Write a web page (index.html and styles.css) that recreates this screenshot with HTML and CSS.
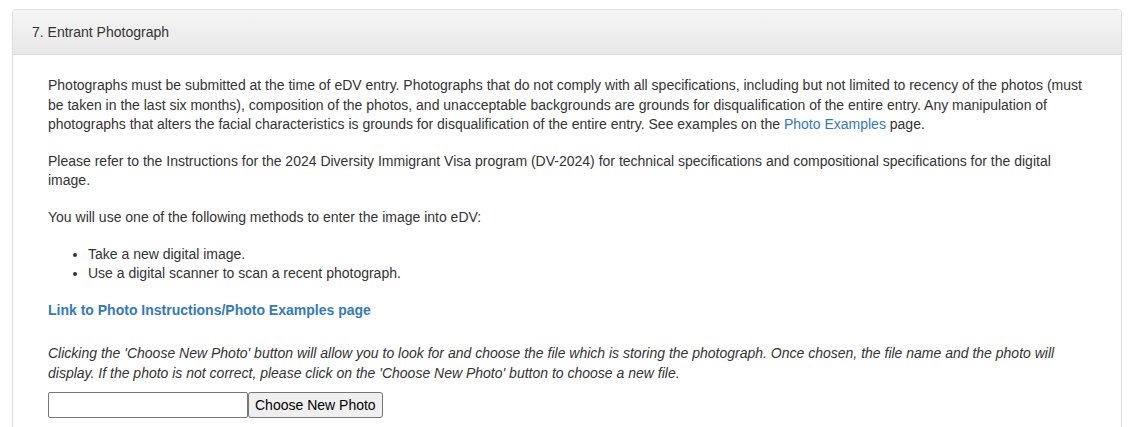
FILE: index.html
```html
<!DOCTYPE html>
<html lang="en">
<head>
<meta charset="utf-8">
<title>Entrant Photograph</title>
<link rel="stylesheet" href="styles.css">
</head>
<body>
<div class="page">
  <section class="panel">
    <div class="panel-heading">7. Entrant Photograph</div>
    <div class="panel-body">
      <p>Photographs must be submitted at the time of eDV entry. Photographs that do not comply with all specifications, including but not limited to recency of the photos (must be taken in the last six months), composition of the photos, and unacceptable backgrounds are grounds for disqualification of the entire entry. Any manipulation of photographs that alters the facial characteristics is grounds for disqualification of the entire entry. See examples on the <a href="#" class="link">Photo Examples</a> page.</p>
      <p>Please refer to the Instructions for the 2024 Diversity Immigrant Visa program (DV-2024) for technical specifications and compositional specifications for the digital image.</p>
      <p>You will use one of the following methods to enter the image into eDV:</p>
      <ul class="methods">
        <li>Take a new digital image.</li>
        <li>Use a digital scanner to scan a recent photograph.</li>
      </ul>
      <p class="strong-link"><a href="#" class="link">Link to Photo Instructions/Photo Examples page</a></p>
      <p class="note">Clicking the 'Choose New Photo' button will allow you to look for and choose the file which is storing the photograph. Once chosen, the file name and the photo will display. If the photo is not correct, please click on the 'Choose New Photo' button to choose a new file.</p>
      <div class="file-row">
        <input type="text" class="file-name" aria-label="File name">
        <button type="button" class="choose-btn">Choose New Photo</button>
      </div>
    </div>
  </section>
</div>
</body>
</html>
```
FILE: styles.css
```css
html, body {
  margin: 0;
  padding: 0;
  background: #fff;
}
body {
  font-family: "Liberation Sans", Arial, Helvetica, sans-serif;
  font-size: 14px;
  line-height: 1.4;
  color: #333;
}
.page {
  padding: 9px 9px 0 12px;
}
.panel {
  border: 1px solid #ddd;
  border-radius: 4px;
  background: #fff;
  box-shadow: 0 1px 2px rgba(0,0,0,0.05);
}
.panel-heading {
  padding: 12px 19px;
  line-height: 20px;
  background: linear-gradient(to bottom, #f5f5f5 0%, #e8e8e8 100%);
  border-bottom: 1px solid #ddd;
  border-radius: 3px 3px 0 0;
  color: #333;
}
.panel-body {
  padding: 21px 35px 20px 35px;
}
.panel-body p {
  margin: 0 0 17px;
}
.link {
  color: #337ab7;
  text-decoration: none;
}
.methods {
  margin: 0 0 17px;
  padding-left: 40px;
}
.strong-link {
  font-weight: bold;
}
.panel-body p.strong-link {
  margin-bottom: 24px;
}
.panel-body p.note {
  font-style: italic;
  margin-bottom: 8px;
}
.file-row {
  display: flex;
  align-items: stretch;
}
.file-name {
  box-sizing: border-box;
  width: 200px;
  height: 26px;
  margin: 0;
  border: 1px solid #767676;
  border-radius: 2px;
  padding: 1px 2px;
  font: inherit;
  background: #fff;
}
.choose-btn {
  box-sizing: border-box;
  height: 26px;
  margin: 0;
  padding: 1px 6px;
  border: 1px solid #767676;
  border-radius: 3px;
  background: #efefef;
  color: #000;
  font-family: "Liberation Sans", Arial, sans-serif;
  font-size: 14px;
}
```
